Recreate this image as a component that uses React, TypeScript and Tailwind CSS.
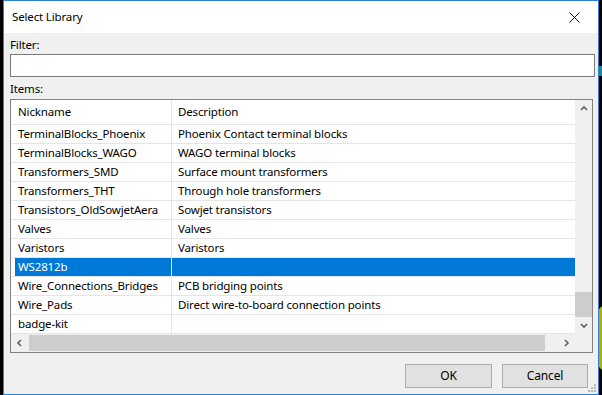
import React from 'react';

const rows: [string, string][] = [
  ['TerminalBlocks_Phoenix', 'Phoenix Contact terminal blocks'],
  ['TerminalBlocks_WAGO', 'WAGO terminal blocks'],
  ['Transformers_SMD', 'Surface mount transformers'],
  ['Transformers_THT', 'Through hole transformers'],
  ['Transistors_OldSowjetAera', 'Sowjet transistors'],
  ['Valves', 'Valves'],
  ['Varistors', 'Varistors'],
  ['WS2812b', ''],
  ['Wire_Connections_Bridges', 'PCB bridging points'],
  ['Wire_Pads', 'Direct wire-to-board connection points'],
  ['badge-kit', ''],
];

const SELECTED = 'WS2812b';

function Chevron({ dir }: { dir: 'up' | 'down' | 'left' | 'right' }) {
  const d = {
    up: 'M1 5 L4 2 L7 5',
    down: 'M1 2 L4 5 L7 2',
    left: 'M5 1 L2 4 L5 7',
    right: 'M2 1 L5 4 L2 7',
  }[dir];
  return (
    <svg width="8" height="8" viewBox="0 0 8 8">
      <path d={d} fill="none" stroke="#606060" strokeWidth="1.6" />
    </svg>
  );
}

export default function App() {
  return (
    <div
      className="relative w-[602px] h-[395px] bg-black overflow-hidden"
      style={{ fontFamily: '"Noto Sans", "Open Sans", sans-serif' }}
    >
      {/* bits of desktop behind the dialog */}
      <div className="absolute left-[596px] top-[303px] w-[30px] h-[70px] rounded-full bg-[#b3ad0c]" />
      <div className="absolute left-[599px] top-[66px] w-[3px] h-[10px] bg-[#1a8a8a]" />

      <div className="absolute left-[3px] top-0 w-[596px] h-[395px] border border-[#2a7fd6] bg-[#f0f0f0] flex flex-col text-[11.5px] tracking-[-0.15px] text-black">
        {/* title bar */}
        <div className="h-[32px] bg-white flex items-center justify-between pl-[8px] pr-[18px] shrink-0">
          <span className="leading-none">Select Library</span>
          <svg width="11" height="11" viewBox="0 0 11 11">
            <path d="M0.5 0.5 L10.5 10.5 M10.5 0.5 L0.5 10.5" stroke="#111" strokeWidth="1" />
          </svg>
        </div>

        <div className="flex flex-col pl-[6px] pr-[3px]">
          <div className="mt-[4px] h-[16px] leading-[16px]">Filter:</div>
          <div className="mt-[1px] h-[23px] bg-white border border-[#7a7a7a]" />
          <div className="mt-[4px] h-[16px] leading-[16px]">Items:</div>

          {/* list */}
          <div className="mt-[2px] h-[254px] w-[583px] border border-[#828282] bg-white flex flex-col">
            <div className="flex h-[234px]">
              <div className="flex-1 flex flex-col">
                <div className="h-[25px] flex border-b border-[#e5e5e5] shrink-0">
                  <div className="w-[161px] border-r border-[#e5e5e5] pl-[7px] flex items-center">Nickname</div>
                  <div className="flex-1 pl-[6px] flex items-center">Description</div>
                </div>
                {rows.map(([nick, desc]) => {
                  const sel = nick === SELECTED;
                  return (
                    <div key={nick} className="h-[19px] flex border-b border-[#e5e5e5] shrink-0">
                      <div className="w-[161px] border-r border-[#e5e5e5] flex">
                        <div
                          className={`flex-1 ml-[4px] pl-[3px] flex items-center whitespace-nowrap ${
                            sel ? 'bg-[#0078d7] text-white' : ''
                          }`}
                        >
                          {nick}
                        </div>
                      </div>
                      <div
                        className={`flex-1 pl-[6px] flex items-center whitespace-nowrap ${
                          sel ? 'bg-[#0078d7] text-white' : ''
                        }`}
                      >
                        {desc}
                      </div>
                    </div>
                  );
                })}
              </div>
              {/* vertical scrollbar */}
              <div className="w-[17px] bg-[#f0f0f0] flex flex-col">
                <div className="h-[17px] flex items-center justify-center">
                  <Chevron dir="up" />
                </div>
                <div className="flex-1 flex flex-col">
                  <div className="h-[175px]" />
                  <div className="h-[25px] bg-[#cdcdcd]" />
                </div>
                <div className="h-[17px] flex items-center justify-center">
                  <Chevron dir="down" />
                </div>
              </div>
            </div>
            {/* horizontal scrollbar */}
            <div className="h-[18px] flex bg-[#f0f0f0]">
              <div className="w-[17px] flex items-center justify-center">
                <Chevron dir="left" />
              </div>
              <div className="flex-1 flex py-[1px]">
                <div className="ml-[1px] w-[516px] bg-[#cdcdcd]" />
              </div>
              <div className="w-[17px] flex items-center justify-center">
                <Chevron dir="right" />
              </div>
              <div className="w-[17px] bg-[#f0f0f0]" />
            </div>
          </div>

          {/* buttons */}
          <div className="mt-[11px] flex justify-end gap-[10px] pr-[7px]">
            <button className="w-[87px] h-[24px] bg-[#e1e1e1] border border-[#adadad] text-[12px]">OK</button>
            <button className="w-[86px] h-[24px] bg-[#e1e1e1] border border-[#adadad] text-[12px]">Cancel</button>
          </div>
        </div>

        {/* resize grip */}
        <svg className="absolute right-[1px] bottom-[1px]" width="10" height="10" viewBox="0 0 10 10">
          <rect x="7" y="1" width="2" height="2" fill="#b8b8b8" />
          <rect x="4" y="4" width="2" height="2" fill="#b8b8b8" />
          <rect x="7" y="4" width="2" height="2" fill="#b8b8b8" />
          <rect x="1" y="7" width="2" height="2" fill="#b8b8b8" />
          <rect x="4" y="7" width="2" height="2" fill="#b8b8b8" />
          <rect x="7" y="7" width="2" height="2" fill="#b8b8b8" />
        </svg>
      </div>
    </div>
  );
}
